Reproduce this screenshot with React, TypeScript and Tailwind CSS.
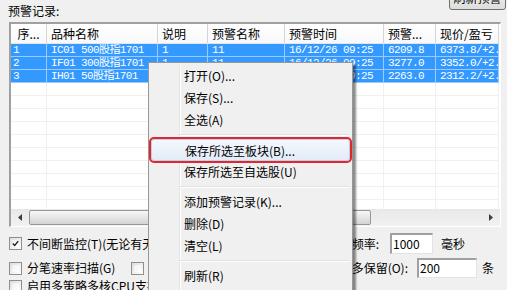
import React from 'react'

const cjk = "font-['Noto_Sans_CJK_SC',sans-serif]"
const mono = "font-['Liberation_Mono','Noto_Sans_CJK_SC',monospace]"

const colW = ['w-[36px]', 'w-[111px]', 'w-[50px]', 'w-[77px]', 'w-[99px]', 'w-[52px]', 'w-[63px]']
const headers = ['序...', '品种名称', '说明', '预警名称', '预警时间', '预警...', '现价/盈亏']

const rows = [
  ['1', 'IC01 500股指1701', '1', '11', '16/12/26 09:25', '6209.8', '6373.8/+2.57%'],
  ['2', 'IF01 300股指1701', '1', '11', '16/12/26 09:25', '3277.0', '3352.0/+2.29%'],
  ['3', 'IH01 50股指1701', '1', '11', '16/12/26 09:25', '2263.0', '2312.2/+2.17%'],
]

function Checkbox({ checked = false }: { checked?: boolean }) {
  return (
    <span className="w-[13px] h-[13px] shrink-0 border border-[#8e8f8f] bg-[linear-gradient(135deg,#dcdcdc,#ffffff)] p-[2px] flex items-center justify-center">
      <span className="w-full h-full bg-[linear-gradient(135deg,#f0f0f0,#ffffff)] flex items-center justify-center">
        {checked && (
          <svg width="9" height="9" viewBox="0 0 9 9">
            <path d="M1 4.5 L3.5 7 L8 1.5" stroke="#1c1c1c" strokeWidth="1.8" fill="none" />
          </svg>
        )}
      </span>
    </span>
  )
}

function MenuItem({ label, hot = false }: { label: string; hot?: boolean }) {
  return (
    <div
      className={`h-[22px] leading-[22px] pl-[33px] text-[12px] text-black whitespace-nowrap ${
        hot
          ? 'rounded-[3px] border border-[#b8d2ee] bg-[linear-gradient(#f4f8fd,#e2ebf7)] leading-[20px] pl-[32px] outline-2 outline-[#e3262b] outline-offset-0'
          : ''
      }`}
    >
      {label}
    </div>
  )
}

function Sep() {
  return (
    <div className="h-[8px] flex flex-col justify-center pl-[29px] pr-[1px]">
      <div className="h-[1px] bg-[#e0e0e0]" />
      <div className="h-[1px] bg-white" />
    </div>
  )
}

export default function App() {
  const blank = Array.from({ length: 10 })
  return (
    <div className={`w-[507px] h-[290px] bg-[#f0f0f0] relative overflow-hidden ${cjk} text-[12px] text-black`}>
      {/* top */}
      <div className="flex justify-between items-start h-[22px]">
        <div className="pl-[8px] pt-[3px] leading-[16px]">预警记录:</div>
        <button className="w-[57px] h-[24px] -mt-[14px] mr-[1px] rounded-[3px] border border-[#707070] bg-[linear-gradient(#f2f2f2,#dddddd)] text-[12px] leading-[14px] text-center whitespace-nowrap overflow-hidden">
          刷新预警
        </button>
      </div>

      {/* list */}
      <div className="ml-[9px] w-[492px] h-[205px] border-t-2 border-l-2 border-[#a0a0a0] border-r border-b border-r-white border-b-white bg-white flex flex-col">
        <div className="h-[20px] flex border-b border-[#e5e5e5] bg-[linear-gradient(#ffffff,#f7f8fa)]">
          {headers.map((h, i) => (
            <div
              key={h}
              className={`${colW[i]} shrink-0 border-r border-[#d5d5d5] leading-[19px] whitespace-nowrap overflow-hidden ${
                i === 0 ? 'text-center' : 'pl-[4px]'
              }`}
            >
              {h}
            </div>
          ))}
        </div>
        <div className="h-[166px] overflow-hidden">
          {rows.map((r, ri) => (
            <div key={ri} className="h-[13px] flex">
              {r.map((c, i) => (
                <div
                  key={i}
                  className={`${colW[i]} shrink-0 h-full bg-[#3399ff] border-r border-b border-[#9ccaff] text-white ${mono} text-[11px] tracking-[-0.6px] leading-[12px] whitespace-nowrap overflow-hidden ${
                    i === 0 ? 'pl-[2px]' : 'pl-[4px]'
                  }`}
                >
                  {c}
                </div>
              ))}
            </div>
          ))}
          {blank.map((_, ri) => (
            <div key={ri} className="h-[13px] flex">
              {colW.map((w, i) => (
                <div key={i} className={`${w} shrink-0 h-full border-r border-b border-[#f0f0f0]`} />
              ))}
            </div>
          ))}
        </div>
        {/* horizontal scrollbar */}
        <div className="h-[17px] flex bg-[linear-gradient(#e8e8e8,#f2f2f2)]">
          <div className="w-[18px] flex items-center justify-center">
            <svg width="4" height="7" viewBox="0 0 4 7">
              <path d="M4 0 L0 3.5 L4 7 Z" fill="#3c3c3c" />
            </svg>
          </div>
          <div className="w-[342px] my-[1px] rounded-[2px] border border-[#979797] bg-[linear-gradient(#f7f7f7,#e6e6e6_50%,#d3d3d3)]" />
          <div className="flex-1" />
          <div className="w-[18px] flex items-center justify-center">
            <svg width="4" height="7" viewBox="0 0 4 7">
              <path d="M0 0 L4 3.5 L0 7 Z" fill="#3c3c3c" />
            </svg>
          </div>
        </div>
      </div>

      {/* options */}
      <div className="mt-[6px] flex flex-col">
        <div className="h-[21px] flex items-center">
          <div className="w-[379px] ml-[9px] flex items-center">
            <Checkbox checked />
            <span className="ml-[5px] whitespace-nowrap">不间断监控(T)(无论有无预警)</span>
            <span className="ml-auto whitespace-nowrap pr-[9px]">频率:</span>
          </div>
          <div className="ml-[2px] w-[43px] h-[21px] border-t-2 border-l-2 border-[#a0a0a0] border-r border-b border-r-[#e3e3e3] border-b-[#e3e3e3] bg-white leading-[17px] pl-[1px]">
            1000
          </div>
          <span className="ml-[8px]">毫秒</span>
        </div>
        <div className="h-[20px] mt-[4px] flex items-center">
          <div className="w-[404px] ml-[9px] flex items-center">
            <Checkbox />
            <span className="ml-[5px] whitespace-nowrap">分笔速率扫描(G)</span>
            <span className="ml-[16px]">
              <Checkbox />
            </span>
            <span className="ml-[5px] whitespace-nowrap">启动时加载</span>
            <span className="ml-auto whitespace-nowrap pr-[5px]">多保留(O):</span>
          </div>
          <div className="ml-[4px] w-[60px] h-[20px] border-t-2 border-l-2 border-[#a0a0a0] border-r border-b border-r-[#e3e3e3] border-b-[#e3e3e3] bg-white leading-[16px] pl-[1px]">
            200
          </div>
          <span className="ml-[5px]">条</span>
        </div>
        <div className="h-[14px] mt-[1px] flex items-center ml-[9px]">
          <Checkbox />
          <span className="ml-[5px] whitespace-nowrap">启用多策略多核CPU支持</span>
        </div>
      </div>

      {/* context menu */}
      <div className="absolute left-[148px] top-[62px] w-[205px] h-[240px] border border-[#979797] bg-[#f0f0f0] p-[2px] shadow-[3px_3px_2px_rgba(0,0,0,0.45)]">
        <div className="absolute left-[30px] top-[2px] bottom-0 w-[2px] border-l border-[#e2e3e3] border-r border-r-white" />
        <div className="relative">
          <MenuItem label="打开(O)..." />
          <MenuItem label="保存(S)..." />
          <MenuItem label="全选(A)" />
          <Sep />
          <MenuItem label="保存所选至板块(B)..." hot />
          <MenuItem label="保存所选至自选股(U)" />
          <Sep />
          <MenuItem label="添加预警记录(K)..." />
          <MenuItem label="删除(D)" />
          <MenuItem label="清空(L)" />
          <Sep />
          <MenuItem label="刷新(R)" />
        </div>
      </div>
    </div>
  )
}
